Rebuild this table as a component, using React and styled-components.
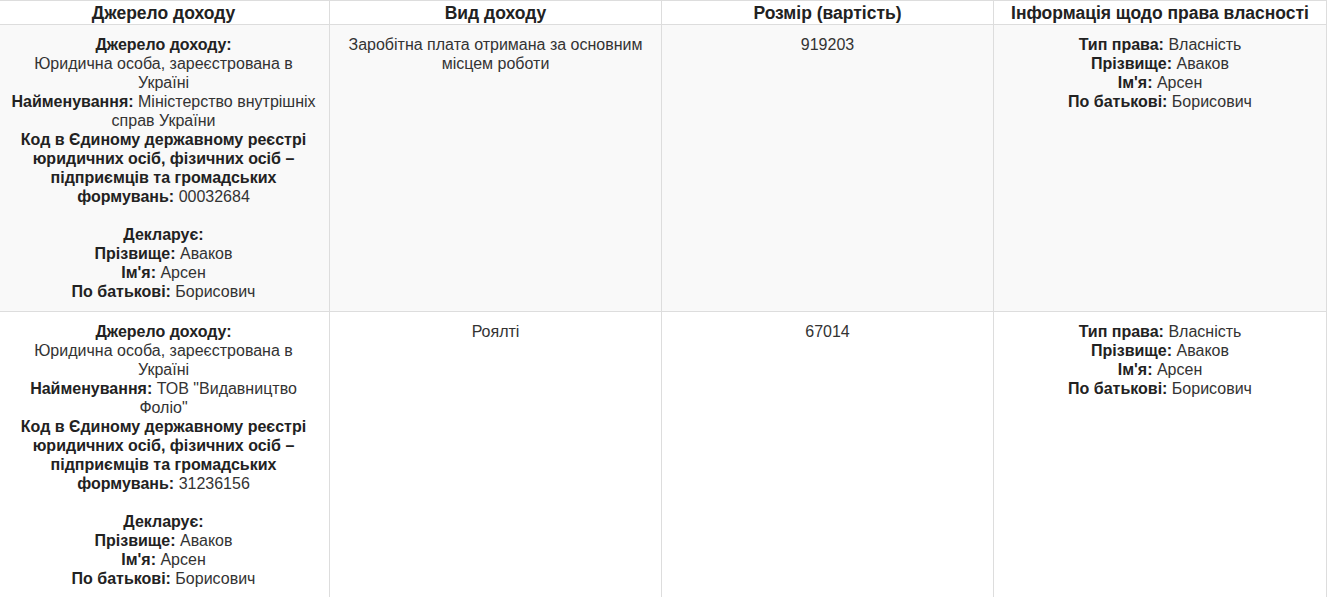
import React from "react";
import styled, { createGlobalStyle } from "styled-components";

const Global = createGlobalStyle`
  html, body { margin: 0; padding: 0; background: #fff; }
  body { font-family: "Liberation Sans", Arial, sans-serif; color: #333; }
`;

const Table = styled.table`
  border-collapse: collapse;
  table-layout: fixed;
  width: 1329px;
  margin-left: -3px;
  font-family: "Liberation Sans", Arial, sans-serif;
  font-size: 16px;
  line-height: 19px;
  color: #333;
`;

const Th = styled.th`
  border: 1px solid #ddd;
  font-size: 17.5px;
  font-weight: bold;
  line-height: 20px;
  padding: 2px 8px 1px;
  text-align: center;
  color: #222;
  background: #fff;
`;

const Tr = styled.tr`
  background: ${(p) => (p.$striped ? "#f9f9f9" : "#fff")};
`;

const Td = styled.td`
  border: 1px solid #ddd;
  padding: 10px 11px;
  vertical-align: top;
  text-align: center;
`;

const Label = styled.b`
  font-weight: bold;
  color: #222;
`;

const Gap = styled.div`
  height: 19px;
`;

const Line = styled.div``;

function Person() {
  return (
    <>
      <Line><Label>Прізвище:</Label> Аваков</Line>
      <Line><Label>Ім'я:</Label> Арсен</Line>
      <Line><Label>По батькові:</Label> Борисович</Line>
    </>
  );
}

function Source({ name, code }) {
  return (
    <>
      <Line><Label>Джерело доходу:</Label></Line>
      <Line>Юридична особа, зареєстрована в Україні</Line>
      <Line><Label>Найменування:</Label> {name}</Line>
      <Line>
        <Label>
          Код в Єдиному державному реєстрі юридичних осіб, фізичних осіб – підприємців та громадських формувань:
        </Label>{" "}
        {code}
      </Line>
      <Gap />
      <Line><Label>Декларує:</Label></Line>
      <Person />
    </>
  );
}

function Rights() {
  return (
    <>
      <Line><Label>Тип права:</Label> Власність</Line>
      <Person />
    </>
  );
}

const rows = [
  {
    name: "Міністерство внутрішніх справ України",
    code: "00032684",
    kind: "Заробітна плата отримана за основним місцем роботи",
    amount: "919203",
  },
  {
    name: 'ТОВ "Видавництво Фоліо"',
    code: "31236156",
    kind: "Роялті",
    amount: "67014",
  },
];

export default function App() {
  return (
    <>
      <Global />
      <Table>
        <colgroup>
          <col style={{ width: "332px" }} />
          <col style={{ width: "332px" }} />
          <col style={{ width: "332px" }} />
          <col style={{ width: "333px" }} />
        </colgroup>
        <thead>
          <tr>
            <Th>Джерело доходу</Th>
            <Th>Вид доходу</Th>
            <Th>Розмір (вартість)</Th>
            <Th>Інформація щодо права власності</Th>
          </tr>
        </thead>
        <tbody>
          {rows.map((r, i) => (
            <Tr key={i} $striped={i % 2 === 0}>
              <Td><Source name={r.name} code={r.code} /></Td>
              <Td>{r.kind}</Td>
              <Td>{r.amount}</Td>
              <Td><Rights /></Td>
            </Tr>
          ))}
        </tbody>
      </Table>
    </>
  );
}
